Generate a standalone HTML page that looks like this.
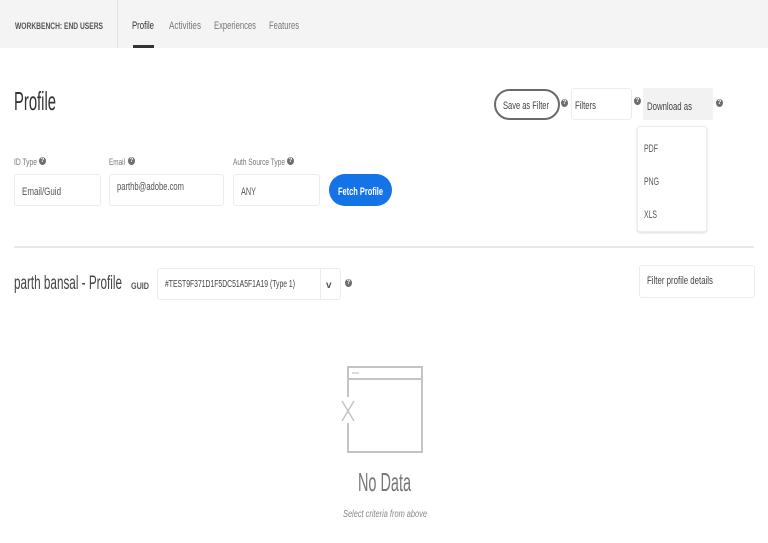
<!DOCTYPE html>
<html><head><meta charset="utf-8"><style>
*{margin:0;padding:0;box-sizing:border-box}
body{width:768px;height:543px;background:#fff;position:relative;overflow:hidden;font-family:"Liberation Sans",sans-serif;color:#4b4b4b}
.a{position:absolute}
.box{position:absolute;border:1px solid #ececec;background:#fff;border-radius:3px}
.q{position:absolute;width:7px;height:8px;border-radius:50%;background:#6e6e6e;color:#fff;font-size:6px;font-weight:bold;text-align:center;line-height:8px}
svg text{font-family:"Liberation Sans",sans-serif}
</style></head><body>
<div class="a" style="left:0;top:0;width:768px;height:48px;background:#f4f4f4"></div>
<div class="a" style="left:117px;top:0;width:1px;height:48px;background:#e2e2e2"></div>
<div class="a" style="left:133px;top:45px;width:21px;height:3px;background:#333"></div>

<div class="q" style="left:39px;top:157px">?</div>
<div class="q" style="left:128px;top:157px">?</div>
<div class="q" style="left:287px;top:157px">?</div>
<div class="box" style="left:14px;top:174px;width:87px;height:32px"></div>
<div class="box" style="left:109px;top:174px;width:115px;height:32px"></div>
<div class="box" style="left:233px;top:174px;width:87px;height:32px"></div>
<div class="a" style="left:329px;top:174px;width:63px;height:32px;border-radius:16px;background:#1473e6"></div>

<div class="a" style="left:494px;top:89px;width:66px;height:31px;border:2px solid #6a6a6a;border-radius:16px"></div>
<div class="q" style="left:561px;top:99px">?</div>
<div class="box" style="left:571px;top:88px;width:61px;height:32px"></div>
<div class="q" style="left:634px;top:97px">?</div>
<div class="a" style="left:643px;top:88px;width:70px;height:32px;background:#f2f2f2;border-radius:2px"></div>
<div class="q" style="left:716px;top:99px">?</div>
<div class="box" style="left:637px;top:126px;width:70px;height:106px;box-shadow:0 1px 2px rgba(0,0,0,.15)"></div>

<div class="a" style="left:14px;top:246px;width:740px;height:2px;background:#e8e8e8"></div>
<div class="box" style="left:157px;top:268px;width:184px;height:32px"></div>
<div class="a" style="left:320px;top:268px;width:1px;height:32px;background:#ececec"></div>
<div class="q" style="left:345px;top:279px">?</div>
<div class="box" style="left:639px;top:265px;width:116px;height:33px"></div>

<svg class="a" style="left:0;top:0" width="768" height="543" viewBox="0 0 768 543">
<g lengthAdjust="spacingAndGlyphs">
<text x="15" y="29" font-size="9" font-weight="bold" fill="#555" textLength="88" lengthAdjust="spacingAndGlyphs">WORKBENCH: END USERS</text>
<text x="132" y="29" font-size="11" fill="#333" textLength="22" lengthAdjust="spacingAndGlyphs">Profile</text>
<text x="169" y="29" font-size="11" fill="#777" textLength="32" lengthAdjust="spacingAndGlyphs">Activities</text>
<text x="214" y="29" font-size="11" fill="#777" textLength="42" lengthAdjust="spacingAndGlyphs">Experiences</text>
<text x="269" y="29" font-size="11" fill="#777" textLength="30" lengthAdjust="spacingAndGlyphs">Features</text>
<text x="14" y="110" font-size="26" fill="#333" textLength="42" lengthAdjust="spacingAndGlyphs">Profile</text>
<text x="14" y="165" font-size="9" fill="#777" textLength="23" lengthAdjust="spacingAndGlyphs">ID Type</text>
<text x="109" y="165" font-size="9" fill="#777" textLength="16" lengthAdjust="spacingAndGlyphs">Email</text>
<text x="233" y="165" font-size="9" fill="#777" textLength="52" lengthAdjust="spacingAndGlyphs">Auth Source Type</text>
<text x="22" y="195" font-size="11" fill="#555" textLength="39" lengthAdjust="spacingAndGlyphs">Email/Guid</text>
<text x="117" y="190" font-size="11" fill="#555" textLength="67" lengthAdjust="spacingAndGlyphs">parthb@adobe.com</text>
<text x="241" y="195" font-size="11" fill="#555" textLength="15" lengthAdjust="spacingAndGlyphs">ANY</text>
<text x="338" y="195" font-size="11" font-weight="bold" fill="#fff" textLength="45" lengthAdjust="spacingAndGlyphs">Fetch Profile</text>
<text x="503" y="109" font-size="11" fill="#444" textLength="46" lengthAdjust="spacingAndGlyphs">Save as Filter</text>
<text x="575" y="109" font-size="11" fill="#444" textLength="21" lengthAdjust="spacingAndGlyphs">Filters</text>
<text x="647" y="110" font-size="11" fill="#444" textLength="45" lengthAdjust="spacingAndGlyphs">Download as</text>
<text x="644" y="152" font-size="11" fill="#555" textLength="14" lengthAdjust="spacingAndGlyphs">PDF</text>
<text x="644" y="185" font-size="11" fill="#555" textLength="15" lengthAdjust="spacingAndGlyphs">PNG</text>
<text x="644" y="218" font-size="11" fill="#555" textLength="13" lengthAdjust="spacingAndGlyphs">XLS</text>
<text x="14" y="289" font-size="19" fill="#444" textLength="108" lengthAdjust="spacingAndGlyphs">parth bansal - Profile</text>
<text x="131" y="289" font-size="9" font-weight="bold" fill="#555" textLength="18" lengthAdjust="spacingAndGlyphs">GUID</text>
<text x="165" y="287" font-size="10" fill="#444" textLength="130" lengthAdjust="spacingAndGlyphs">#TEST9F371D1F5DC51A5F1A19 (Type 1)</text>
<text x="326" y="288" font-size="10" font-weight="bold" fill="#555">v</text>
<text x="647" y="284" font-size="11" fill="#444" textLength="66" lengthAdjust="spacingAndGlyphs">Filter profile details</text>
<text x="358" y="491" font-size="26" fill="#777" textLength="53" lengthAdjust="spacingAndGlyphs">No Data</text>
<text x="343" y="517" font-size="10" font-style="italic" fill="#888" textLength="84" lengthAdjust="spacingAndGlyphs">Select criteria from above</text>
</g>
<g fill="none" stroke="#c4c4c4" stroke-width="2" transform="translate(338,363)">
<path d="M10 34V4h74v85H10V60"/><path d="M10 16h74"/><path d="M14 10h7" stroke-width="1.2"/>
<path d="M4 38l12 20M16 38L4 58" stroke-width="1.5"/>
</g>
</svg>
</body></html>
